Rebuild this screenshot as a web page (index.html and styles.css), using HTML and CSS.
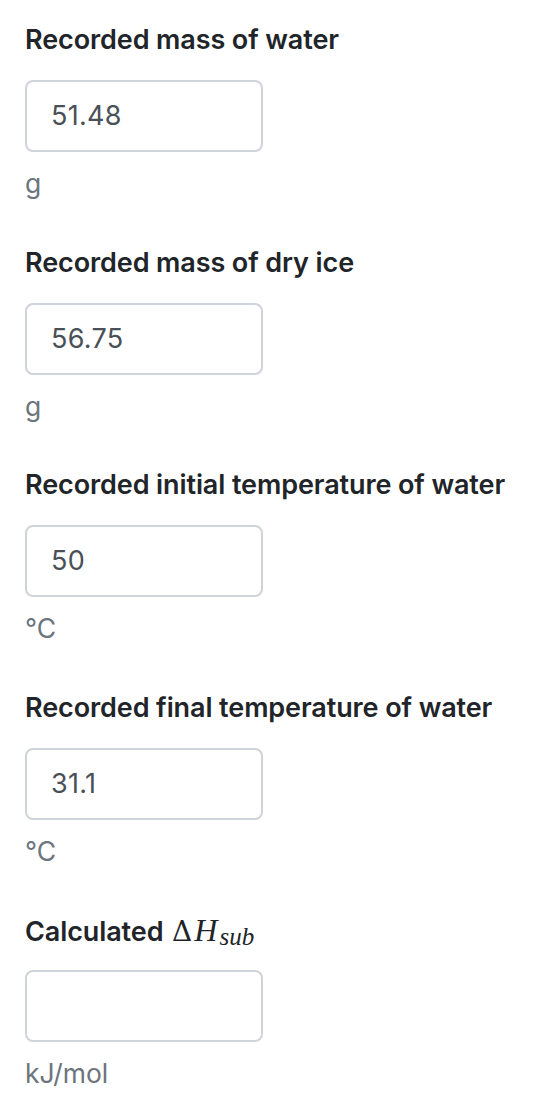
FILE: index.html
```html
<!DOCTYPE html>
<html>
<head>
<meta charset="utf-8">
<link rel="stylesheet" href="styles.css">
</head>
<body>
<main class="form">
  <div class="field">
    <label class="label">Recorded mass of water</label>
    <div class="input">51.48</div>
    <div class="unit">g</div>
  </div>
  <div class="field">
    <label class="label">Recorded mass of dry ice</label>
    <div class="input">56.75</div>
    <div class="unit">g</div>
  </div>
  <div class="field">
    <label class="label">Recorded initial temperature of water</label>
    <div class="input">50</div>
    <div class="unit">°C</div>
  </div>
  <div class="field">
    <label class="label">Recorded final temperature of water</label>
    <div class="input">31.1</div>
    <div class="unit">°C</div>
  </div>
  <div class="field">
    <label class="label">Calculated <span class="math"><span class="delta">Δ</span><span class="mi">H</span><span class="msub">sub</span></span></label>
    <div class="input"></div>
    <div class="unit">kJ/mol</div>
  </div>
</main>
</body>
</html>
```
FILE: styles.css
```css
html, body {
  margin: 0;
  padding: 0;
  background: #ffffff;
}
body {
  font-family: Inter, "Noto Sans", sans-serif;
}
.form {
  display: flex;
  flex-direction: column;
  gap: 39.5px;
  padding: 20px 25px 0 25px;
}
.field {
  display: flex;
  flex-direction: column;
  align-items: flex-start;
}
.label {
  font-size: 27px;
  font-weight: 560;
  color: #212529;
  line-height: 40px;
  height: 40px;
  margin-bottom: 20px;
  white-space: nowrap;
  letter-spacing: -0.1px;
}
.input {
  box-sizing: border-box;
  width: 238px;
  height: 72px;
  border: 2px solid #ced4da;
  border-radius: 8px;
  padding: 0 24px;
  font-size: 27px;
  color: #495057;
  line-height: 68px;
  letter-spacing: 0.3px;
}
.unit {
  font-size: 26.5px;
  color: #6c757d;
  margin-top: 11px;
  line-height: 40px;
}
.math {
  font-family: "Liberation Serif", "DejaVu Serif", serif;
  font-weight: 400;
  font-size: 32px;
  letter-spacing: 0;
  margin-left: 2px;
}
.delta {
  font-family: "DejaVu Serif", serif;
  font-size: 28px;
  font-style: normal;
  margin-right: 2px;
}
.mi {
  font-style: italic;
  font-size: 32px;
}
.msub {
  font-style: italic;
  font-size: 25px;
  position: relative;
  top: 4px;
  margin-left: 2px;
}
```
